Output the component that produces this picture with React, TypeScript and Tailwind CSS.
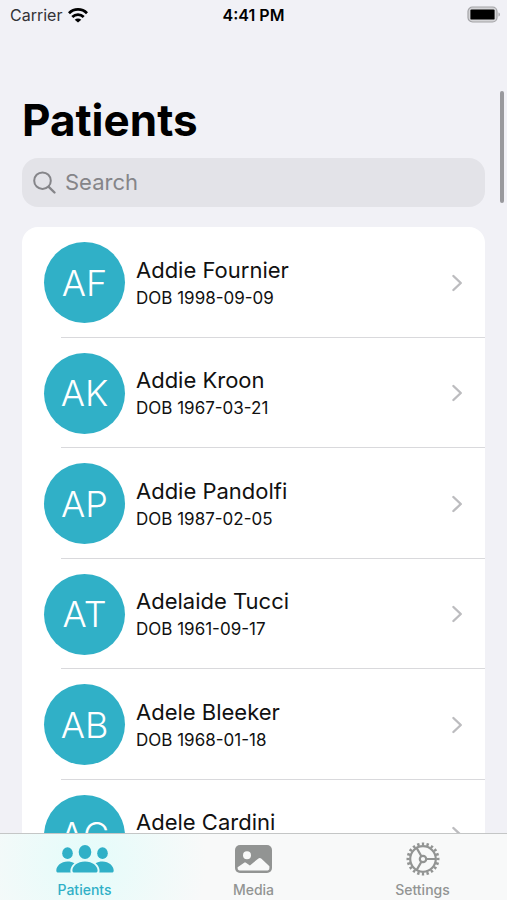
type Patient = {
  name: string;
  initials: string;
  dob?: string;
};

const PATIENTS: Patient[] = [
  { name: "Addie Fournier", initials: "AF", dob: "1998-09-09" },
  { name: "Addie Kroon", initials: "AK", dob: "1967-03-21" },
  { name: "Addie Pandolfi", initials: "AP", dob: "1987-02-05" },
  { name: "Adelaide Tucci", initials: "AT", dob: "1961-09-17" },
  { name: "Adele Bleeker", initials: "AB", dob: "1968-01-18" },
  { name: "Adele Cardini", initials: "AC" },
];

function WifiIcon() {
  return (
    <svg viewBox="0 0 20 15" className="h-[15px] w-5" fill="none" stroke="#000" strokeWidth="2.8" aria-hidden="true">
      <path d="M1 5.2C6 .2 14 .2 19 5.2" />
      <path d="M4.3 9c3.2-3.1 8.2-3.1 11.4 0" />
      <path d="M10 14.6 6.7 11.7c1.8-1.6 4.8-1.6 6.6 0z" fill="#000" stroke="none" />
    </svg>
  );
}

function BatteryIcon() {
  return (
    <svg viewBox="0 0 34 18" className="h-[18px] w-[34px]" aria-hidden="true">
      <rect x="1" y="1" width="29" height="15" rx="4.5" fill="#d4d4d7" stroke="#a3a3a6" strokeWidth="1.2" />
      <rect x="3.4" y="3.4" width="24.2" height="10.2" rx="1.2" fill="#000" />
      <path d="M31.5 6.5c1.8.4 1.8 3.6 0 4z" fill="#a3a3a6" />
    </svg>
  );
}

function SearchIcon() {
  return (
    <svg viewBox="0 0 24 24" className="size-6 shrink-0" fill="none" stroke="#858589" strokeLinecap="round" aria-hidden="true">
      <circle cx="9.5" cy="9.7" r="8.3" strokeWidth="2" />
      <path d="m15.7 15.9 5.8 5.6" strokeWidth="2.4" />
    </svg>
  );
}

function ChevronIcon() {
  return (
    <svg viewBox="0 0 12 18" className="h-[18px] w-3 shrink-0" fill="none" stroke="#bcbcbf" strokeWidth="2.4" strokeLinecap="round" strokeLinejoin="round" aria-hidden="true">
      <path d="m2.4 2 7.4 7-7.4 7" />
    </svg>
  );
}

function PeopleIcon() {
  return (
    <svg viewBox="0 0 58 28" className="h-7 w-[58px]" fill="currentColor" aria-hidden="true">
      <ellipse cx="29" cy="7" rx="6.3" ry="6.9" />
      <ellipse cx="11.5" cy="8.2" rx="5.3" ry="5.9" />
      <ellipse cx="46.5" cy="8.2" rx="5.3" ry="5.9" />
      <path d="M18.4 18.2C16.5 17 14.2 16.4 11.6 16.4 5 16.4.3 20.8.3 25.4c0 1.5.8 2.2 2.3 2.2h12.1c-.9-3.2.6-6.9 3.7-9.4z" />
      <path d="M39.6 18.2c1.9-1.2 4.2-1.8 6.8-1.8 6.6 0 11.3 4.4 11.3 9 0 1.5-.8 2.2-2.3 2.2H43.3c.9-3.2-.6-6.9-3.7-9.4z" />
      <path d="M29 16.4c-7.6 0-12.6 4.5-12.6 9 0 1.5.9 2.2 2.4 2.2h20.4c1.5 0 2.4-.7 2.4-2.2 0-4.5-5-9-12.6-9z" />
    </svg>
  );
}

function MediaIcon() {
  return (
    <svg viewBox="0 0 37 28" className="h-7 w-[37px]" aria-hidden="true">
      <rect width="37" height="28" rx="5" fill="currentColor" />
      <circle cx="12" cy="10.3" r="4" fill="#f8f9f9" />
      <path d="m2.6 22.3 6.2-4.4c.8-.6 1.7-.6 2.5 0l3.6 2.6 8.2-6.8c1.2-1 2.2-1 3.4 0l7.9 7.6v1.6c0 1.9-1 2.6-3 2.6H5.6c-2 0-3-.7-3-2.6z" fill="#f8f9f9" />
    </svg>
  );
}

function GearIcon() {
  return (
    <svg viewBox="0 0 34 34" className="size-[34px]" fill="none" stroke="currentColor" strokeWidth="2.2" aria-hidden="true">
      <circle cx="17" cy="17" r="15" strokeWidth="3" pathLength="40" strokeDasharray="1 1" strokeDashoffset="0.5" />
      <circle cx="17" cy="17" r="12.8" />
      <circle cx="17" cy="17" r="3.2" />
      <path d="M20.2 17h9.6M15.4 14.2 10.6 5.9M15.4 19.8l-4.8 8.3" />
    </svg>
  );
}

function StatusBar() {
  return (
    <header className="grid h-[30px] shrink-0 grid-cols-3 items-center px-1.5 text-black">
      <div className="flex items-center gap-1.5 pl-1 text-[16px] text-[#333336]">
        Carrier
        <WifiIcon />
      </div>
      <time className="text-center text-[16px] font-semibold">4:41 PM</time>
      <div className="flex justify-end">
        <BatteryIcon />
      </div>
    </header>
  );
}

function PatientRow({ name, initials, dob }: Patient) {
  return (
    <li className="relative odd:h-[111px] even:h-[110px]">
      <a href="#patient" className="flex h-full items-center gap-[11px] pr-[22px] pl-[22px]">
        <span className="flex size-[81px] shrink-0 items-center justify-center rounded-full bg-[#30b0c7] text-[36px] font-light text-white">
          {initials}
        </span>
        <span className="flex flex-1 flex-col text-[#111]">
          <span className="text-[22px] leading-[30px]">{name}</span>
          <span className="h-[26px] text-[17px] leading-[26px]">{dob && `DOB ${dob}`}</span>
        </span>
        <ChevronIcon />
      </a>
      <span className="absolute right-0 bottom-0 left-[39px] h-px bg-[#d9d9dc]" />
    </li>
  );
}

function TabBar() {
  return (
    <nav className="grid h-[67px] shrink-0 grid-cols-3 border-t border-[#c4c6c6] bg-[radial-gradient(circle_at_17%_40%,#e4fcfa,#f8f9f9_120px)] text-[14px] font-medium text-[#929493]">
      <a href="#patients" className="flex flex-col items-center text-[#30b0c7]">
        <span className="flex h-12 items-center pt-0.5">
          <PeopleIcon />
        </span>
        <span className="leading-4">Patients</span>
      </a>
      <a href="#media" className="flex flex-col items-center">
        <span className="flex h-12 items-center pt-0.5">
          <MediaIcon />
        </span>
        <span className="leading-4">Media</span>
      </a>
      <a href="#settings" className="flex flex-col items-center">
        <span className="flex h-12 items-center pt-0.5">
          <GearIcon />
        </span>
        <span className="leading-4">Settings</span>
      </a>
    </nav>
  );
}

export default function App() {
  return (
    <div className="relative flex h-screen flex-col overflow-hidden bg-[#f1f1f6] font-['Inter','Liberation_Sans',sans-serif]">
      <StatusBar />
      <main className="min-h-0 flex-1 overflow-y-auto px-[22px] pt-16 [scrollbar-width:none]">
        <h1 className="text-[44px] leading-[52px] font-bold text-black">Patients</h1>
        <label className="mt-3 flex h-[49px] items-center gap-2 rounded-2xl bg-[#e3e3e8] px-[11px]">
          <SearchIcon />
          <input
            type="search"
            aria-label="Search"
            placeholder="Search"
            className="min-w-0 flex-1 bg-transparent text-[22px] outline-none placeholder:text-[#858589]"
          />
        </label>
        <ul className="mt-5 overflow-hidden rounded-2xl bg-white">
          {PATIENTS.map((patient) => (
            <PatientRow key={patient.name} {...patient} />
          ))}
        </ul>
      </main>
      <span className="absolute top-[91px] right-[3px] h-[112px] w-1 rounded-full bg-[#99999d]" />
      <TabBar />
    </div>
  );
}
